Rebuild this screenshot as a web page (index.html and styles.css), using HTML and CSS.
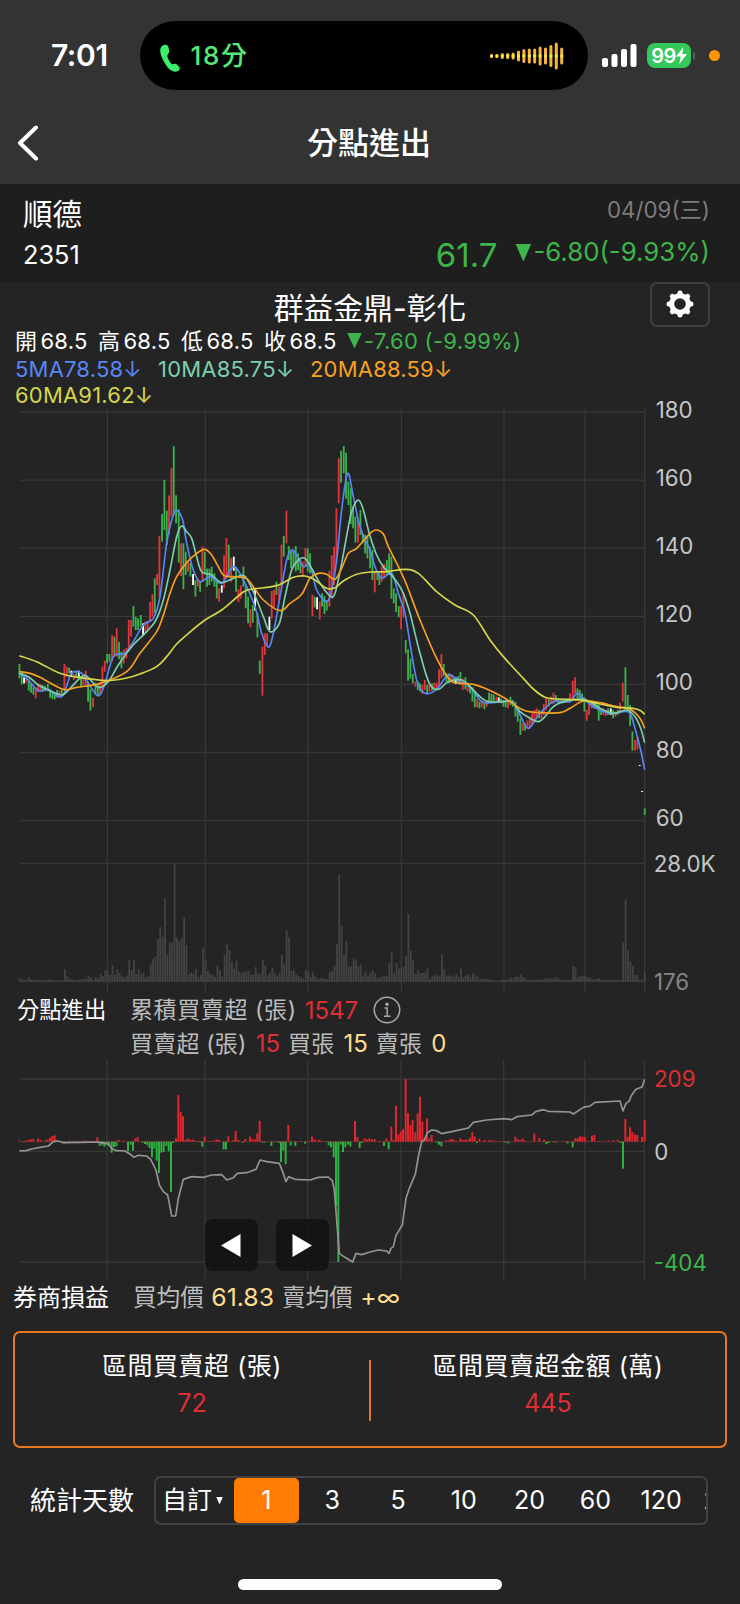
FILE: index.html
```html
<!DOCTYPE html>
<html lang="zh-Hant">
<head>
    <meta charset="UTF-8">
    <meta name="viewport" content="width=device-width, initial-scale=1.0">
    <title>分點進出</title>
    <link rel="stylesheet" href="styles.css">
</head>
<body>

    <header class="top">
        <div class="status-bar">
            <span class="time">7:01</span>
            <div class="island">
                <svg class="phone" viewBox="0 0 20 28"><path d="M1.500 2.500C3.500 .2 7.500 0 8.200 2.400L9.200 6.400C9.500 8 9 9 8 10C6.800 11.300 7.500 14 9.300 17C10.500 19.200 11.800 20.600 13.300 20.200C14.800 19.700 15.800 19.500 17 20.600L19.200 23C20.400 24.500 19.500 26 18 27C14.500 29 9.500 27 5.600 20.500C1 13.500-1.500 6.500 1.500 2.500Z"/></svg>
                <span class="call-time">18分</span>
                <svg class="wave" viewBox="0 0 74 28" id="wave"></svg>
            </div>
            <svg class="signal" viewBox="0 0 35 23">
                <rect x="0" y="14" width="6" height="9" rx="2"/>
                <rect x="9.500" y="10" width="6" height="13" rx="2"/>
                <rect x="19" y="5" width="6" height="18" rx="2"/>
                <rect x="28.500" y="0" width="6" height="23" rx="2"/>
            </svg>
            <div class="battery">99<svg viewBox="0 0 11 17"><path d="M7.500 0L0 9.500H4.700L3.300 17L11 7H6.200Z"/></svg></div>
            <i class="nub"></i>
            <i class="mic-dot"></i>
        </div>
        <div class="nav">
            <svg class="back" viewBox="0 0 22 36"><path d="M19 2.500L3 18L19 33.500"/></svg>
            <h1>分點進出</h1>
        </div>
    </header>

    <section class="quote">
        <div class="quote-row">
            <span class="stock-name">順德</span>
            <span class="date">04/09(三)</span>
        </div>
        <div class="quote-row second">
            <span class="stock-code">2351</span>
            <span class="price">61.7</span>
            <i class="tri"></i>
            <span class="change">-6.80(-9.93%)</span>
        </div>
    </section>

    <main>
        <div class="branch">
            <h2>群益金鼎-彰化</h2>
            <button class="gear">
                <svg viewBox="-14 -14 28 28">
                    <circle r="8.300" stroke-width="5"/>
                    <path stroke-width="5" stroke-linecap="round" d="M0-9V-11M0 9V11M-9 0H-11M9 0H11M6.400 6.400L7.700 7.700M-6.400 6.400L-7.700 7.700M6.400-6.400L7.700-7.700M-6.400-6.400L-7.700-7.700"/>
                </svg>
            </button>
        </div>
        <div class="ohlc">
            <span>開<b>68.5</b></span>
            <span>高<b>68.5</b></span>
            <span>低<b>68.5</b></span>
            <span>收<b>68.5</b></span>
            <i class="tri small"></i>
            <em>-7.60 (-9.99%)</em>
        </div>
        <div class="ma">
            <span class="ma5">5MA78.58↓</span>
            <span class="ma10">10MA85.75↓</span>
            <span class="ma20">20MA88.59↓</span>
            <span class="ma60">60MA91.62↓</span>
        </div>

        <svg class="chart price-chart" id="price" viewBox="0 24 2220 1758"></svg>

        <div class="panel-title">
            <strong>分點進出</strong>
            <div class="stats">
                <p class="wide">累積買賣超 (張)<span class="red">1547</span>
                    <svg class="info" viewBox="0 0 28 28"><circle cx="14" cy="14" r="12.800"/><circle class="dot" cx="14" cy="8.200" r="1.700"/><path d="M11.500 12H14.200V20M11 20.300H17.500"/></svg>
                </p>
                <p class="detail">買賣超 (張)<span class="red">15</span><label>買張</label><span class="gold">15</span><label>賣張</label><span class="gold">0</span></p>
            </div>
        </div>

        <div class="sub">
            <svg class="chart sub-chart" id="branch" viewBox="0 210 2220 660"></svg>
            <div class="pager">
                <button><svg viewBox="0 0 20 23"><path d="M19.500 0V23L0 11.500Z"/></svg></button>
                <button><svg viewBox="0 0 20 23"><path d="M.5 0V23L20 11.500Z"/></svg></button>
            </div>
        </div>

        <div class="panel-title profit">
            <strong>券商損益</strong>
            <p>買均價<span class="gold">61.83</span><label>賣均價</label><span class="gold">+∞</span></p>
        </div>

        <div class="summary">
            <div>
                <p>區間買賣超 (張)</p>
                <span>72</span>
            </div>
            <i></i>
            <div>
                <p>區間買賣超金額 (萬)</p>
                <span>445</span>
            </div>
        </div>

        <div class="days">
            <strong>統計天數</strong>
            <div class="tabs">
                <span class="custom">自訂<i></i></span>
                <span class="active">1</span>
                <span>3</span>
                <span>5</span>
                <span>10</span>
                <span>20</span>
                <span>60</span>
                <span>120</span>
                <span>240</span>
            </div>
        </div>
    </main>

    <div class="home-bar"></div>

    <script src="chart.js"></script>
</body>
</html>
```
FILE: styles.css
```css
:root {
    --bg: #242424;
    --header-bg: #333333;
    --red: #dd2f35;
    --green: #3db54a;
    --orange: #ff7d00;
    --gold: #ffdc8c;
    --font: Inter, "Noto Sans CJK TC", sans-serif;
}
* {
    box-sizing: border-box;
}
body {
    margin: 0;
    width: 740px;
    height: 1604px;
    overflow: hidden;
    background: var(--bg);
    color: #fff;
    font-family: var(--font);
    font-size: 22px;
    line-height: 1;
}
h1, h2, p {
    margin: 0;
}
b, em, i, strong {
    font-weight: 400;
    font-style: normal;
}
svg {
    display: block;
    flex: none;
}
button {
    padding: 0;
    border: none;
    display: flex;
    align-items: center;
    justify-content: center;
}

/* header */
.top {
    height: 184px;
    background: var(--header-bg);
}
.status-bar {
    display: flex;
    align-items: center;
    height: 111px;
    padding-left: 51px;
}
.time {
    width: 88.5px;
    margin-top: -1px;
    font-size: 30px;
    font-weight: 600;
    letter-spacing: -0.4px;
}
.island {
    display: flex;
    align-items: center;
    width: 448.5px;
    height: 69px;
    padding: 0 24px 0 20px;
    border-radius: 35px;
    background: #000;
}
.phone {
    width: 20px;
    height: 28px;
    margin-top: 4px;
    fill: #3bef6b;
}
.call-time {
    margin-left: 11px;
    color: #55e878;
    font-size: 26px;
    font-weight: 500;
    letter-spacing: 1.7px;
}
.wave {
    width: 74px;
    height: 28px;
    margin-left: auto;
}
.signal {
    width: 35px;
    height: 23px;
    margin-left: 14px;
    fill: #fff;
}
.battery {
    display: flex;
    align-items: center;
    justify-content: center;
    width: 44px;
    height: 25px;
    margin-left: 10px;
    border-radius: 8px;
    background: #34c759;
    font-size: 20px;
    font-weight: 600;
    letter-spacing: -0.5px;
}
.battery svg {
    width: 11px;
    height: 17px;
    fill: #fff;
}
.nub {
    width: 2px;
    height: 8px;
    margin-left: 2px;
    border-radius: 0 3px 3px 0;
    background: #5c5c5c;
}
.mic-dot {
    width: 11px;
    height: 11px;
    margin-left: 14px;
    border-radius: 50%;
    background: #ff9500;
}
.nav {
    display: grid;
    grid-template-columns: 60px 1fr 60px;
    align-items: center;
    height: 63px;
    padding: 0 17px;
}
.back {
    width: 22px;
    height: 36px;
    fill: none;
    stroke: #fff;
    stroke-width: 4;
    stroke-linecap: round;
    stroke-linejoin: round;
}
.nav h1 {
    margin-left: -2px;
    font-size: 31px;
    font-weight: 500;
    text-align: center;
}

/* quote */
.quote {
    height: 98px;
    padding: 13px 30px 0 23px;
    background: #1e1e1e;
}
.quote-row {
    display: flex;
    justify-content: space-between;
}
.stock-name {
    font-size: 29.5px;
    line-height: 34px;
}
.date {
    color: #7c7c7c;
    font-size: 22.3px;
    line-height: 26px;
}
.quote-row.second {
    margin-top: 7px;
    align-items: center;
    height: 34px;
    font-size: 26px;
}
.stock-code {
    font-size: 25.3px;
}
.price {
    margin-left: auto;
    color: var(--green);
    font-size: 33px;
}
.tri {
    width: 16px;
    height: 18px;
    margin: -5px 2px 0 18px;
    background: var(--green);
    clip-path: polygon(0 0, 100% 0, 50% 100%);
}
.change {
    margin-top: -6px;
    color: var(--green);
    font-size: 25.8px;
}

/* branch and indicators */
.branch {
    display: grid;
    grid-template-columns: 1fr 60px;
    height: 45px;
    padding-right: 30px;
}
.branch h2 {
    padding: 12px 0 0 90px;
    font-size: 29.8px;
    font-weight: 400;
    text-align: center;
}
.gear {
    height: 45px;
    border: 2px solid #3f3f3f;
    border-radius: 7px;
    background: transparent;
}
.gear svg {
    width: 28px;
    height: 28px;
    margin-top: -1px;
    fill: none;
    stroke: #fff;
}
.ohlc {
    display: grid;
    grid-template-columns: repeat(4, 83px) 15px auto;
    align-items: center;
    height: 28px;
    padding-left: 15px;
}
.ohlc b {
    margin-left: 3.5px;
    letter-spacing: .2px;
}
.ohlc em {
    margin-left: 2px;
    color: var(--green);
    letter-spacing: .3px;
}
.tri.small {
    width: 15px;
    height: 16px;
    margin: -1px 0 0;
}
.ma {
    display: grid;
    grid-template-columns: 143px 152px 1fr;
    grid-template-rows: 27px 26px;
    align-items: center;
    height: 53px;
    padding-left: 15px;
    letter-spacing: .2px;
}
.ma5 { color: #5786f5; }
.ma10 { color: #7bcfae; }
.ma20 { color: #f7a021; }
.ma60 { color: #d5d64a; }

/* charts */
.chart {
    width: 740px;
    overflow: visible;
}
.price-chart {
    height: 586px;
}
.sub-chart {
    height: 220px;
}
.grid-line {
    stroke: #373737;
    stroke-width: 4;
}
.volume {
    fill: #434343;
}
.line {
    fill: none;
    stroke-width: 5;
    stroke-linejoin: round;
}
.total {
    fill: none;
    stroke: #949494;
    stroke-width: 5;
    stroke-linejoin: round;
}
.axis {
    fill: #c6c6c6;
    font-size: 67px;
}
.panel-title {
    display: flex;
    height: 66px;
    padding-left: 17px;
}
.panel-title strong {
    width: 113px;
    font-size: 22.3px;
    line-height: 32px;
}
.panel-title p {
    display: flex;
    align-items: center;
    height: 34px;
    color: #bcbcbc;
    font-size: 23px;
}
.panel-title .wide {
    height: 33px;
    letter-spacing: .6px;
}
.panel-title .detail {
    letter-spacing: .2px;
}
.panel-title .red,
.panel-title .gold {
    margin-left: 8px;
    font-size: 24px;
    letter-spacing: 0;
}
.panel-title .red {
    color: var(--red);
}
.panel-title .gold {
    color: var(--gold);
}
.panel-title label {
    margin-left: 8px;
}
.detail .red,
.detail .gold {
    margin-left: 9px;
}
.info {
    width: 28px;
    height: 28px;
    margin: -1px 0 0 15px;
    fill: none;
    stroke: #a8a8a8;
    stroke-width: 1.5;
}
.info .dot {
    fill: #a8a8a8;
    stroke: none;
}
.sub {
    position: relative;
}
.pager {
    position: absolute;
    left: 205px;
    top: 159px;
    display: flex;
    gap: 18.5px;
}
.pager button {
    width: 52.5px;
    height: 52px;
    border-radius: 8px;
    background: rgba(15, 15, 15, .75);
}
.pager svg {
    width: 20px;
    height: 23px;
    fill: #fff;
}
.panel-title.profit {
    height: 51px;
    padding-left: 13px;
}
.profit strong {
    width: 120px;
    font-size: 24px;
    line-height: 36px;
}
.panel-title.profit p {
    height: 35px;
    font-size: 23.6px;
}
.panel-title.profit .gold {
    margin-left: 7.5px;
    font-size: 24.8px;
}

/* summary */
.summary {
    display: grid;
    grid-template-columns: 1fr 2px 1fr;
    height: 117px;
    margin: 0 13px;
    border: 2px solid #e87722;
    border-radius: 7px;
    text-align: center;
    font-size: 25px;
}
.summary p {
    margin-top: 19px;
    letter-spacing: .5px;
    line-height: 28px;
}
.summary span {
    display: block;
    margin-top: 10px;
    color: var(--red);
    line-height: 26px;
}
.summary i {
    height: 61px;
    margin-top: 27px;
    background: #e87722;
}

/* day tabs */
.days {
    display: flex;
    align-items: center;
    margin-top: 28px;
    padding-left: 30px;
    font-size: 25px;
}
.days strong {
    width: 124px;
    font-size: 26px;
}
.tabs {
    display: flex;
    align-items: center;
    width: 554px;
    height: 49px;
    border: 2px solid #424242;
    border-radius: 7px;
    overflow: hidden;
}
.tabs span {
    flex: none;
    width: 65.8px;
    line-height: 45px;
    text-align: center;
}
.tabs .custom {
    display: flex;
    align-items: center;
    width: 77.5px;
    padding-left: 6px;
}
.custom i {
    width: 7px;
    height: 8px;
    margin-left: 4px;
    background: #fff;
    clip-path: polygon(0 0, 100% 0, 50% 100%);
}
.tabs .active {
    border-radius: 5px;
    background: var(--orange);
}
.home-bar {
    width: 264px;
    height: 11px;
    margin: 54px auto 0;
    border-radius: 6px;
    background: #fff;
}
```
FILE: chart.js
```js
var COLORS = { r: '#e0353b', g: '#3bb04c', w: '#ffffff' };
var GRID_X = [322, 616, 924, 1204, 1512, 1755, 1934];
var HALF = 1110; // second half of the series starts here
var STEP = 7.16;

// each candle: x, colour, high-low
var candlesA = '58g792-835 65g818-852 72w832-850 79r830-848 86g838-872 93g850-878 100g862-884 107r868-895 114r850-875 121r852-874 128g855-875 135g858-874 143g852-874 150g868-893 157g875-897 164g880-898 171g870-892 178r872-892 185g868-890 193r792-868 200r800-830 207g803-820 214w812-830 221r822-840 228g815-835 236w812-833 243g828-862 250r835-855 257r812-855 264g845-905 271g868-932 279r893-922 286g848-885 293g852-885 300r846-885 307r800-870 314r782-815 321g762-790 328g762-785 336r706-785 343g710-765 350r685-770 357g726-778 364g755-805 371r748-790 379r744-775 386r660-755 393r660-710 400g618-680 407g650-690 414g655-690 422g645-680 429w670-706 436r664-695 443r662-690 450r606-665 457r583-650 464g535-640 471r522-555 478r408-590 486g342-425 493g240-390 500g332-435 507r286-405 514r205-350 521g138-345 528g286-370 536g328-488 543r430-528 550g430-568 557g455-525 564r486-515 571g490-530 579w522-555 586g540-590 593r535-560 600g545-575 607r440-545 614g455-520 621g506-560 628g506-555 635g500-545 643g520-560 650g545-595 657r565-605 665w556-578 672r466-565 679r414-536 686g434-530 693r474-545 701w470-512 708g500-575 715r568-606 722r556-596 730g500-560 737g560-625 744g590-670 751r628-682 758g615-668 765w566-632 772g640-712 779g782-822 787r740-887 794r700-765 801r700-740 808w650-690 815r573-655 822r570-622 829g545-585 837r560-610 844r434-560 851g408-470 859r332-430 866g438-480 873g450-505 880g452-498 887g438-515 894g460-510 901g480-520 908r485-530 916r444-500 923g445-515 930g460-520 937r584-648 944g590-622 951w592-628 959r605-658 966g580-620 973g588-642 980g600-632 988r512-620 995r466-590 1002r440-555 1009r325-490 1016r175-310 1023g152-248 1031g138-220 1038g158-296 1045g245-315 1052g265-372 1059g320-385 1066g350-428 1074r360-428 1081g330-405 1088g400-430 1095g405-460 1102g410-475';
var candlesB = '0g440-505 7g450-540 14r515-577 22g515-540 28g520-555 35r500-545 42r492-535 50g480-525 57g460-525 64g470-596 71g565-610 78g580-636 86g618-652 93r618-688 100r580-652 107g720-760 114g748-842 121g776-836 128g822-850 136r845-860 143g845-870 150g850-875 157r855-882 164r840-870 171g855-882 178r850-875 186g850-872 193r848-868 200r848-870 207r808-860 214r762-835 221g792-828 229g820-845 236g820-850 243r822-848 250g832-850 257w832-852 264g828-850 271g816-855 278r835-870 286g832-868 293r848-875 300g855-880 307g862-905 314g880-922 321r898-922 328g905-925 335r900-922 343g905-928 350r900-920 357g878-905 364g882-905 371g884-904 379r890-905 386w892-908 393g895-910 400g900-920 407g900-922 414r900-925 421g890-915 428g900-920 436g905-950 443g925-965 451g955-1005 458r970-992 465g970-992 472r962-985 479r950-985 486r940-972 493r930-965 500r925-950 507g930-955 514r935-955 521r912-945 528r895-930 536g898-920 543r890-912 550r878-912 557g885-905 564g895-908 572r895-908 579g895-910 586r897-908 593g895-905 600r880-902 608r842-895 615r832-880 622g865-895 629g870-895 636g880-905 643g892-935 650r930-962 657r910-945 665r905-925 672g905-925 679g905-925 686g915-962 693g925-945 700r925-945 707r930-948 714g925-945 722w925-945 729g930-955 736r935-950 743g930-945 750r908-940 758r848-905 766g802-930 773g885-930 780g915-978 787g994-1052 795r1020-1052 802r1010-1048 809w1095-1098 816w1173-1176 824g1225-1245';

var volumes = [12,8,5,4,13,6,5,6,6,5,4,4,4,7,4,3,4,4,4,38,17,8,6,5,5,6,8,6,10,17,13,6,14,9,24,16,34,32,20,49,20,37,26,16,14,18,65,35,67,23,37,24,28,12,16,52,68,76,128,164,134,250,80,117,117,354,132,122,130,192,110,22,28,24,38,14,20,102,65,32,24,20,14,48,34,16,80,112,94,60,38,64,30,26,30,30,32,20,22,44,24,24,65,48,20,26,42,26,18,26,80,52,155,132,32,34,22,17,12,9,34,30,14,28,16,8,9,13,8,8,28,32,48,112,320,166,82,122,46,46,70,64,46,52,18,31,18,28,33,24,12,12,16,17,18,56,90,25,56,40,42,44,77,202,92,64,22,34,26,26,28,42,8,16,20,18,15,82,37,18,18,18,14,22,14,40,12,18,20,14,26,20,16,8,10,8,8,7,5,3,3,2,6,6,6,9,12,10,15,14,22,14,10,6,5,7,6,7,6,6,9,10,9,12,9,14,9,6,5,4,5,6,47,44,12,16,18,17,14,12,8,6,8,10,7,5,6,6,6,5,6,4,5,118,246,94,62,47,20,20,3,8,28];

var ma60 = '58,767 110,785 180,820 235,832 320,842 380,834 420,822 470,800 500,770 530,732 570,696 615,660 665,630 730,576 760,567 830,557 880,532 915,528 945,540 980,565 1005,563 1030,543 1070,523 1110,516 1160,515 1215,508 1255,520 1310,575 1365,615 1420,645 1470,720 1510,770 1570,835 1600,867 1635,892 1670,897 1740,900 1800,912 1850,922 1900,925 1922,932 1934,943';
var ma20 = '58,815 90,820 120,832 190,868 230,862 300,850 380,815 420,760 470,695 490,645 510,580 530,530 560,488 590,460 615,448 635,465 655,500 672,527 700,530 738,535 760,560 790,600 840,632 870,610 905,583 930,535 955,520 980,523 1005,538 1025,505 1045,460 1070,445 1110,400 1128,390 1150,402 1165,440 1200,510 1220,555 1260,660 1310,775 1350,840 1385,850 1420,853 1455,865 1510,892 1570,930 1620,938 1680,938 1710,925 1750,903 1800,908 1850,920 1885,925 1905,938 1922,958 1934,985';
var ma10 = '58,820 85,830 115,855 145,870 185,885 210,865 245,830 262,830 295,862 325,845 355,795 395,740 440,695 468,660 490,600 510,510 530,410 545,378 560,395 575,415 590,470 605,515 635,525 665,548 700,535 733,528 760,575 790,650 810,695 838,670 855,590 875,510 895,480 915,475 935,505 960,550 990,588 1005,580 1025,490 1050,355 1065,310 1078,302 1090,330 1110,408 1130,465 1150,500 1170,520 1190,545 1210,580 1230,640 1260,760 1288,850 1315,868 1345,845 1385,840 1410,860 1440,890 1465,905 1510,905 1535,905 1560,935 1590,955 1615,965 1635,950 1660,920 1690,905 1730,898 1760,900 1800,925 1840,940 1880,930 1905,950 1922,985 1934,1028';
var ma5 = '58,820 85,840 115,872 145,868 170,888 190,885 215,820 245,820 265,850 295,888 315,850 340,770 375,760 400,725 430,675 460,655 480,590 500,430 520,345 532,332 548,360 560,430 580,510 600,545 630,530 665,550 700,500 730,540 765,620 785,700 805,742 820,700 840,590 860,480 875,450 890,465 910,500 930,495 950,570 980,605 995,570 1010,480 1025,330 1043,220 1060,290 1080,380 1110,450 1125,500 1145,535 1175,520 1195,580 1215,640 1230,730 1250,840 1275,880 1310,868 1345,825 1380,845 1410,860 1445,905 1480,908 1535,905 1560,945 1585,985 1620,940 1660,905 1710,905 1730,880 1750,895 1780,920 1830,940 1870,935 1890,940 1905,985 1922,1050 1934,1110';

// net buy (+) / net sell (-) per day
var netA = '58:3 72:2 79:4 86:5 93:7 100:8 114:10 121:5 136:4 143:6 150:12 157:17 164:19 171:3 193:-6 207:-2 229:-2 250:3 257:3 264:-2 279:3 292:13 299:-14 306:-10 313:-16 320:-10 327:-14 335:-34 342:-17 349:-15 356:6 370:3 384:-30 392:-10 399:-28 406:10 413:14 428:-4 435:-8 442:-12 449:-20 456:-48 463:-22 470:-58 477:-95 484:-34 491:-32 499:-14 506:-30 513:-152 520:-5 528:10 535:140 542:90 549:76 556:5 563:10 570:6 578:6 585:3 593:2 600:-3 607:-16 614:15 628:2 642:4 650:7 657:5 671:-24 678:-24 685:16 700:5 707:32 714:5 729:-4 736:8 750:15 757:7 764:7 772:25 779:62 786:-3 793:-4 814:-14 821:-3 829:3 836:-5 843:-62 850:-28 857:-68 865:50 872:-12 886:-14 900:2 915:-7 928:2 936:15 943:7 950:3 957:5 964:3 979:2 986:-12 993:-18 1001:-48 1008:-195 1015:-362 1022:-10 1029:-32 1036:-18 1044:-10 1051:-16 1065:62 1072:14 1079:-20 1086:-5 1094:10 1101:6 1108:10';
var netB = '6:7 14:8 28:2 42:-14 49:10 56:-24 64:45 71:5 78:108 85:22 92:30 99:37 107:188 114:85 121:50 128:65 136:28 143:85 150:135 157:60 164:8 171:70 178:10 185:20 200:-4 207:-10 214:-15 228:4 236:4 243:8 250:7 257:3 271:10 278:5 285:5 292:7 300:12 307:28 314:15 321:-5 328:9 343:5 358:5 365:4 372:3 393:-2 407:-4 415:-6 436:15 443:7 450:5 458:9 465:3 493:25 508:11 522:6 529:-8 536:-5 551:-3 558:-3 586:2 593:-6 608:-18 616:10 623:10 630:16 637:15 644:14 652:3 666:18 673:20 687:-2 715:3 730:4 744:5 752:-5 759:-82 766:68 773:15 780:43 787:28 795:22 802:20 816:14 824:65';
var total = '58,483 78,482 95,477 120,472 145,468 160,455 175,453 190,458 240,457 290,456 305,458 325,462 335,475 348,482 375,483 390,492 402,502 415,496 440,498 452,508 468,540 478,585 490,605 503,615 508,640 515,678 527,678 535,625 550,568 575,560 610,562 635,555 665,554 680,570 700,563 712,550 740,548 768,538 780,510 800,515 838,520 848,545 858,575 866,560 885,568 930,570 955,562 985,561 997,572 1003,600 1010,690 1018,790 1035,802 1058,816 1068,790 1085,794 1110,786 1135,780 1160,783 1167,790 1173,775 1180,770 1188,736 1207,705 1218,625 1228,595 1246,552 1256,495 1265,455 1273,450 1282,428 1295,420 1310,422 1325,431 1355,425 1405,414 1420,397 1460,390 1512,386 1535,389 1550,380 1595,375 1607,365 1630,359 1645,364 1710,366 1720,372 1750,352 1770,348 1785,337 1860,333 1869,363 1878,340 1887,334 1895,315 1908,298 1926,291 1934,268';

function rect(x, y, w, h, fill) {
    return '<rect x="' + x + '" y="' + y + '" width="' + w + '" height="' + h + '" fill="' + fill + '"/>';
}
function gridLine(x1, y1, x2, y2) {
    return '<path class="grid-line" d="M' + x1 + ' ' + y1 + 'L' + x2 + ' ' + y2 + '"/>';
}
function label(x, y, text, color) {
    return '<text class="axis" x="' + x + '" y="' + y + '"' + (color ? ' style="fill:' + color + '"' : '') + '>' + text + '</text>';
}
// smooth curve through all points
function curve(str) {
    var p = str.split(' ').map(function (s) { return s.split(',').map(Number); });
    var d = 'M' + p[0];
    for (var i = 0; i < p.length - 1; i++) {
        var a = p[i - 1] || p[i], b = p[i], c = p[i + 1], e = p[i + 2] || c;
        d += 'C' + [b[0] + (c[0] - a[0]) / 6, b[1] + (c[1] - a[1]) / 6,
                    c[0] - (e[0] - b[0]) / 6, c[1] - (e[1] - b[1]) / 6, c[0], c[1]];
    }
    return d;
}
function candles(str, offset) {
    return str.split(' ').map(function (s) {
        var m = s.match(/(\d+)([rgw])(\d+)-(\d+)/);
        return rect(+m[1] + offset - 2.5, +m[3], 5.5, m[4] - m[3], COLORS[m[2]]);
    }).join('');
}
function netBars(str, offset) {
    return str.split(' ').map(function (s) {
        var v = s.split(':').map(Number);
        return v[1] > 0
            ? rect(v[0] + offset - 3, 455 - v[1], 6, v[1], '#e0262f')
            : rect(v[0] + offset - 3, 454, 6, -v[1], '#2fae43');
    }).join('');
}

function drawPrice() {
    var out = '';
    GRID_X.forEach(function (x) { out += gridLine(x, 28, x, 1778); });
    for (var i = 0; i < 7; i++) {
        out += gridLine(60, 36 + i * 204.3, 1934, 36 + i * 204.3);
        out += label(1967, 55 + i * 203.8, 180 - i * 20);
    }
    out += gridLine(60, 1390, 1934, 1390) + gridLine(60, 1744, 1934, 1744);
    out += label(1961, 1415, '28.0K') + label(1962, 1770, '176', '#858585');
    out += '<g class="volume">';
    volumes.forEach(function (v, i) {
        out += '<rect x="' + (55.5 + i * STEP) + '" y="' + (1745 - v) + '" width="5.500" height="' + v + '"/>';
    });
    out += '</g>' + candles(candlesA, 0) + candles(candlesB, HALF);
    [[ma5, '#5786f5'], [ma10, '#7bcfae'], [ma20, '#f7a021'], [ma60, '#d5d64a']].forEach(function (m) {
        out += '<path class="line" stroke="' + m[1] + '" d="' + curve(m[0]) + '"/>';
    });
    document.getElementById('price').innerHTML = out;
}

function drawBranch() {
    var out = '';
    GRID_X.forEach(function (x) { out += gridLine(x - 1, 210, x - 1, 868); });
    [267, 484, 816].forEach(function (y) { out += gridLine(58, y, 1934, y); });
    out += netBars(netA, 0) + netBars(netB, HALF);
    out += '<path stroke="#8b3134" stroke-width="2" d="M58 455H1934"/>';
    out += '<path class="total" d="M' + total.replace(/ /g, 'L') + '"/>';
    out += label(1962, 291, '209', '#dd2f35') + label(1963, 509, '0') + label(1961, 842, '-404', '#3db54a');
    document.getElementById('branch').innerHTML = out;
}

function drawWave() {
    var h = [4, 4, 6, 6, 7, 11, 14, 15, 15, 19, 17, 22, 27, 17];
    document.getElementById('wave').innerHTML = h.map(function (v, i) {
        var x = i * 5.4;
        return '<rect x="' + x + '" y="' + (14 - v / 2) + '" width="3" height="' + v + '" rx="1.500" fill="#f5b53c"/>' +
            '<rect x="' + x + '" y="12.500" width="3" height="3" rx="1" fill="#f8e83c"/>';
    }).join('');
}

drawPrice();
drawBranch();
drawWave();
```
